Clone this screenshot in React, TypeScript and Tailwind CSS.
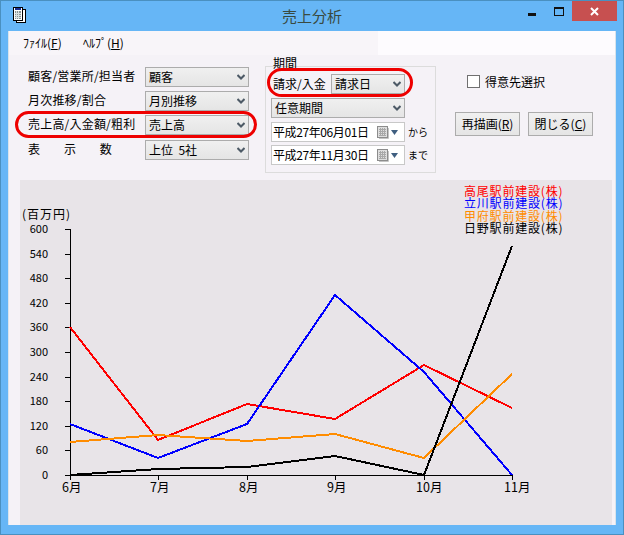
const jp = 'font-["Noto_Sans_CJK_JP",sans-serif]';

const months = ['6月', '7月', '8月', '9月', '10月', '11月'];
const monthX = [70, 158, 247, 335, 424, 512];
const yTicks = [600, 540, 480, 420, 360, 300, 240, 180, 120, 60, 0];

// y pixel positions relative to the window, the chart panel starts at (20, 180)
const series = [
  { name: '高尾駅前建設(株)', color: '#ff0000', legend: 'text-[#ff0000]', ys: [327, 440, 404, 419, 365, 408] },
  { name: '立川駅前建設(株)', color: '#0000ff', legend: 'text-[#0000ff]', ys: [424, 458, 424, 295, 372, 475] },
  { name: '甲府駅前建設(株)', color: '#ff8c00', legend: 'text-[#ff8c00]', ys: [442, 435, 441, 434, 458, 374] },
  { name: '日野駅前建設(株)', color: '#000000', legend: 'text-black', ys: [475, 469, 467, 456, 475, 246] },
];

function Chevron() {
  return (
    <svg width="8" height="6" viewBox="0 0 8 6" className="shrink-0">
      <path d="M0.5 1 L4 4.5 L7.5 1" fill="none" stroke="#4d5a66" strokeWidth="2" />
    </svg>
  );
}

function Select({ value, className }: { value: string; className: string }) {
  return (
    <div
      className={`flex h-[20px] items-center justify-between border border-[#acacac] bg-gradient-to-b from-[#f0f0f0] to-[#e5e5e5] pl-[3px] pr-[3px] text-[12px] leading-none text-black ${className}`}
    >
      <span className="whitespace-pre">{value}</span>
      <Chevron />
    </div>
  );
}

function FormRow({ label, value }: { label: React.ReactNode; value: string }) {
  return (
    <div className="flex items-center">
      <div className="w-[117px] pb-[2px] text-[12px] leading-none tracking-[0.2px] text-black">{label}</div>
      <Select value={value} className="w-[104px]" />
    </div>
  );
}

function CalendarIcon() {
  return (
    <svg width="12" height="13" viewBox="0 0 12 13" className="shrink-0">
      <path d="M11.5 2v10.5H2" fill="none" stroke="#c4c4c4" />
      <rect x="0.5" y="0.5" width="10" height="11" fill="#dedede" stroke="#8c8c8c" />
      <path d="M2 3.5h7M2 5.5h7M2 7.5h7M2 9.5h7M3.5 2v8M5.5 2v8M7.5 2v8" stroke="#a8a8a8" strokeWidth="1" />
    </svg>
  );
}

function DateRow({ value, suffix }: { value: string; suffix: string }) {
  return (
    <div className="flex items-center whitespace-nowrap">
      <div className="flex h-[20px] w-[134px] shrink-0 items-center border border-[#c8c8c8] bg-white pl-[1px] pr-[6px] text-[12px] leading-none tracking-[-0.4px] text-black">
        <span className="flex-1 whitespace-pre pb-[1px]">{value}</span>
        <CalendarIcon />
        <svg width="7" height="5" viewBox="0 0 7 5" className="ml-[2px] shrink-0">
          <path d="M0 0h7L3.5 5z" fill="#3f5f80" />
        </svg>
      </div>
      <span className="ml-[3px] shrink-0 text-[10px] leading-none text-black">{suffix}</span>
    </div>
  );
}

function Button({ children }: { children: React.ReactNode }) {
  return (
    <div className="flex h-[24px] w-[65px] items-center justify-center border border-[#acacac] bg-gradient-to-b from-[#f0f0f0] to-[#e5e5e5] text-[12px] leading-none text-black">
      {children}
    </div>
  );
}

function Chart() {
  const ox = 20;
  const oy = 180;
  return (
    <svg width="592" height="345" viewBox="0 0 592 345" className="block">
      <g transform={`translate(${-ox} ${-oy})`} shapeRendering="crispEdges">
        {/* axes */}
        <path d="M70.5 229 V475.5 H512" fill="none" stroke="#000" strokeWidth="1" />
        {yTicks.map((t, i) => {
          const y = Math.round(229 + i * 24.6);
          return (
            <g key={t}>
              <path d={`M65 ${y + 0.5} H70`} stroke="#000" strokeWidth="1" />
              <text x="48" y={y + 4} textAnchor="end" fontSize="11" fill="#000" fontFamily="Noto Sans CJK JP, sans-serif">
                {t}
              </text>
            </g>
          );
        })}
        {monthX.map((x, i) => (
          <g key={x}>
            <path d={`M${x + 0.5} 475 V480`} stroke="#000" strokeWidth="1" />
            <text x={x - 8} y="492" fontSize="12.5" fill="#000" fontFamily="Noto Sans CJK JP, sans-serif">
              {months[i]}
            </text>
          </g>
        ))}
        <text x="22" y="219" fontSize="12" letterSpacing="1" fill="#000" fontFamily="Noto Sans CJK JP, sans-serif">
          (百万円)
        </text>
        {series.map((s) => (
          <polyline
            key={s.name}
            points={s.ys.map((y, i) => `${monthX[i]},${y}`).join(' ')}
            fill="none"
            stroke={s.color}
            strokeWidth="2"
            strokeLinejoin="round"
          />
        ))}
      </g>
    </svg>
  );
}

export default function App() {
  return (
    <div className={`relative flex h-[535px] w-[624px] flex-col overflow-hidden border border-[#4a90c0] bg-[#66b6f6] ${jp}`}>
      {/* title bar */}
      <div className="relative flex h-[30px] shrink-0 items-start">
        <svg width="13" height="16" viewBox="0 0 13 16" className="absolute left-[12px] top-[6px]">
          <rect x="3.5" y="2.5" width="9" height="13" fill="#fff" stroke="#000" />
          <rect x="0.5" y="0.5" width="9" height="13" fill="#fff" stroke="#000" />
          <rect x="2" y="1" width="6" height="2" fill="#1a2f8f" />
          <rect x="2" y="4" width="6" height="8" fill="#8a9494" />
          <path d="M2 6.5h6M2 8.5h6M2 10.5h6M3.5 4v8M5.5 4v8" stroke="#d8e0e0" />
        </svg>
        <div className="w-full pt-[5px] text-center text-[15px] leading-[20px] text-[#3a4a40]">売上分析</div>
        <div className="absolute right-[6px] top-0 flex items-start">
          <div className="mr-[18px] mt-[12px] h-[3px] w-[8px] bg-[#111]" />
          <div className="mr-[8px] mt-[6px] h-[9px] w-[10px] border border-t-2 border-[#111]" />
          <div className="flex h-[20px] w-[45px] items-center justify-center bg-[#c75050]">
            <svg width="9" height="9" viewBox="0 0 9 9">
              <path d="M1 1L8 8M8 1L1 8" stroke="#fff" strokeWidth="2" />
            </svg>
          </div>
        </div>
      </div>

      {/* client area */}
      <div className="relative mx-[7px] flex min-h-0 flex-1 flex-col border-l border-r border-[#d8e4ec] bg-[#f5f2f7]">
        {/* menu */}
        <div className="flex h-[24px] shrink-0 items-center bg-[#f8f5f9] pl-[14px] text-[12px] leading-none text-black">
          <span className="w-[60px] whitespace-pre">ﾌｧｲﾙ(<u>F</u>)</span>
          <span className="whitespace-pre">ﾍﾙﾌﾟ(<u>H</u>)</span>
          <div className="ml-auto h-full w-[237px] bg-[#fdfbfe]" />
        </div>

        {/* form */}
        <div className="relative flex h-[125px] shrink-0 items-start">
          <div className="ml-[19px] mt-[12px] flex w-[221px] flex-col gap-[4px]">
            <FormRow label="顧客/営業所/担当者" value="顧客" />
            <FormRow label="月次推移/割合" value="月別推移" />
            <FormRow label="売上高/入金額/粗利" value="売上高" />
            <div className="mt-[1px]">
              <FormRow
                label={
                  <span className="flex w-[84px] justify-between">
                    <span>表</span>
                    <span>示</span>
                    <span>数</span>
                  </span>
                }
                value="上位  5社"
              />
            </div>
          </div>

          <div className="relative ml-[16px] mt-[11px] flex h-[107px] w-[171px] flex-col gap-[4px] border border-[#dcdcdc] px-[5px] pt-[7px]">
            <span className="absolute left-[7px] top-[-10px] text-[12px] leading-none text-black">期間</span>
            <div className="flex items-center">
              <span className="w-[60px] whitespace-nowrap pl-[2px] text-[12px] leading-none text-black">請求/入金</span>
              <Select value="請求日" className="w-[74px]" />
            </div>
            <Select value="任意期間" className="w-[134px]" />
            <div className="flex flex-col gap-[3px]">
              <DateRow value="平成27年06月01日" suffix="から" />
              <DateRow value="平成27年11月30日" suffix="まで" />
            </div>
          </div>

          <div className="ml-[19px] mt-[20px] flex flex-col">
            <div className="ml-[12px] flex h-[13px] items-center gap-[5px] text-[12px] leading-none text-black">
              <div className="h-[13px] w-[13px] border border-[#707070] bg-white" />
              <span>得意先選択</span>
            </div>
            <div className="mt-[24px] flex gap-[8px]">
              <Button>再描画(<u>R</u>)</Button>
              <Button>閉じる(<u>C</u>)</Button>
            </div>
          </div>

          {/* red marker ovals drawn over the form */}
          <div className="absolute left-[6px] top-[56px] h-[27px] w-[242px] rounded-[14px] border-[3px] border-[#ee0000]" />
          <div className="absolute left-[258px] top-[13px] h-[29px] w-[146px] rounded-[15px] border-[3px] border-[#ee0000]" />
        </div>

        {/* chart panel */}
        <div className="relative ml-[11px] mr-[3px] flex-1 bg-[#e8e4e8]">
          <Chart />
          <div className="absolute left-[444px] top-[5px] flex flex-col text-[12px] leading-[12.4px] tracking-[0.8px]">
            {series.map((s) => (
              <span key={s.name} className={`whitespace-nowrap ${s.legend}`}>
                {s.name}
              </span>
            ))}
          </div>
        </div>
      </div>
      <div className="h-[9px] shrink-0" />
    </div>
  );
}
